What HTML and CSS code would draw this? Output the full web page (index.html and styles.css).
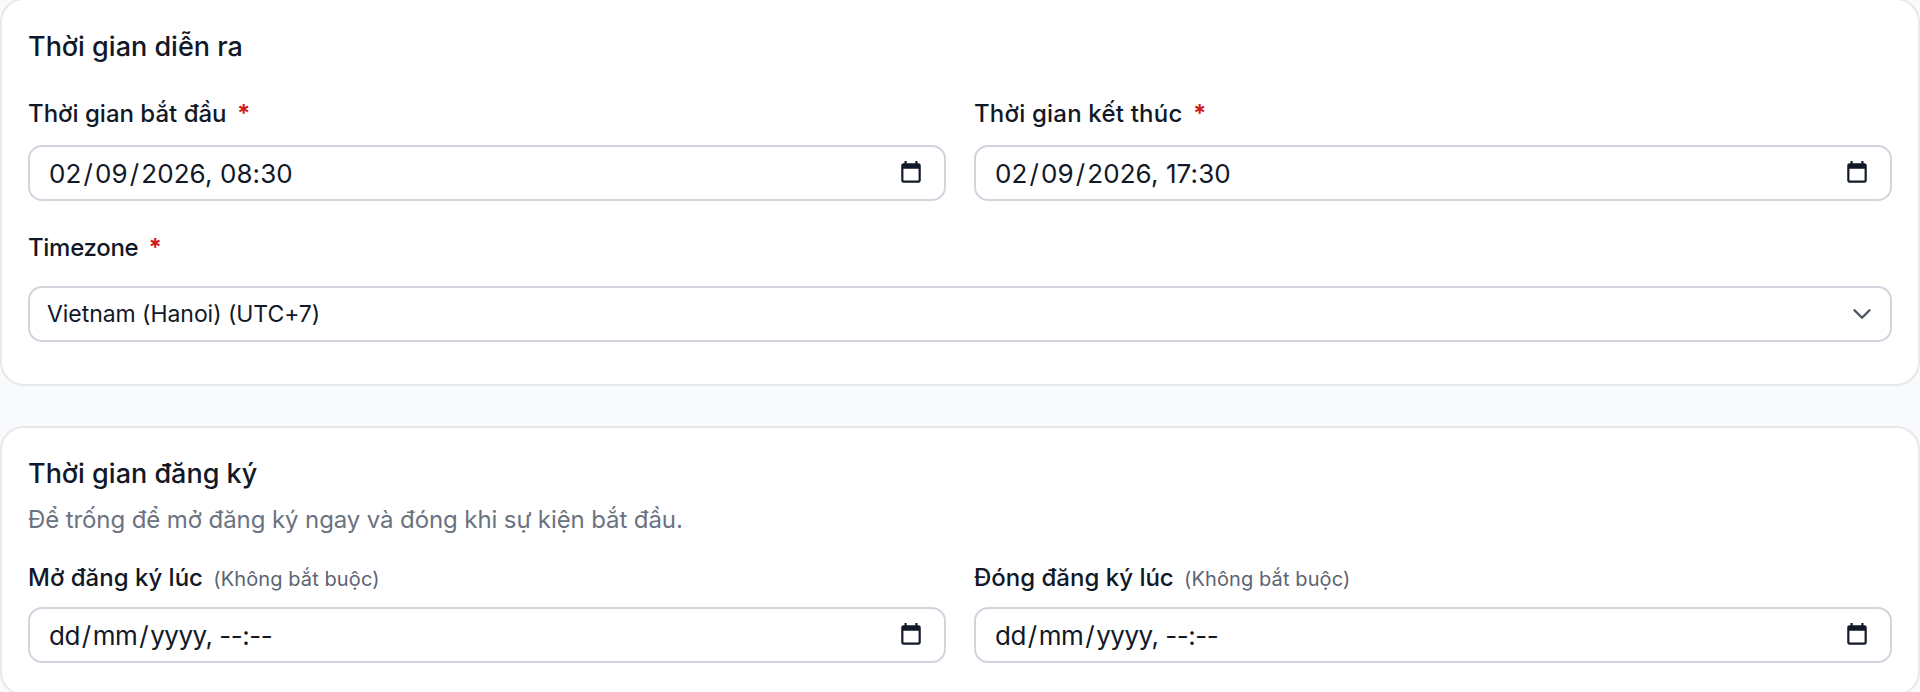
FILE: index.html
```html
<!DOCTYPE html>
<html lang="vi">
<head>
<meta charset="utf-8">
<title>Thời gian</title>
<link rel="stylesheet" href="styles.css">
</head>
<body>
<main class="page">
  <section class="card card-first">
    <h2 class="card-title">Thời gian diễn ra</h2>
    <div class="grid grid-first">
      <div class="field">
        <div class="label">Thời gian bắt đầu <span class="req">*</span></div>
        <div class="input"><span class="val">02<span class="sl">/</span>09<span class="sl">/</span>2026, 08:30</span>
          <svg class="cal" viewBox="0 0 24 24"><path d="M19 3h-1V1h-2v2H8V1H6v2H5c-1.11 0-2 .9-2 2v14c0 1.1.89 2 2 2h14c1.1 0 2-.9 2-2V5c0-1.1-.9-2-2-2zm0 16H5V8h14v11z"/></svg></div>
      </div>
      <div class="field">
        <div class="label label-wide">Thời gian kết thúc <span class="req">*</span></div>
        <div class="input"><span class="val">02<span class="sl">/</span>09<span class="sl">/</span>2026, 17:30</span>
          <svg class="cal" viewBox="0 0 24 24"><path d="M19 3h-1V1h-2v2H8V1H6v2H5c-1.11 0-2 .9-2 2v14c0 1.1.89 2 2 2h14c1.1 0 2-.9 2-2V5c0-1.1-.9-2-2-2zm0 16H5V8h14v11z"/></svg></div>
      </div>
    </div>
    <div class="field tz">
      <div class="label label-tz">Timezone <span class="req">*</span></div>
      <div class="input select"><span class="val-select">Vietnam (Hanoi) (UTC+7)</span>
        <svg class="chev" viewBox="0 0 20 20"><path d="M5 7.5l5 5 5-5"/></svg></div>
    </div>
  </section>
  <section class="card">
    <h2 class="card-title">Thời gian đăng ký</h2>
    <p class="desc">Để trống để mở đăng ký ngay và đóng khi sự kiện bắt đầu.</p>
    <div class="grid">
      <div class="field">
        <div class="label label-opt">Mở đăng ký lúc <span class="opt">(Không bắt buộc)</span></div>
        <div class="input"><span class="val ph">dd<span class="sl">/</span>mm<span class="sl">/</span>yyyy, --:--</span>
          <svg class="cal" viewBox="0 0 24 24"><path d="M19 3h-1V1h-2v2H8V1H6v2H5c-1.11 0-2 .9-2 2v14c0 1.1.89 2 2 2h14c1.1 0 2-.9 2-2V5c0-1.1-.9-2-2-2zm0 16H5V8h14v11z"/></svg></div>
      </div>
      <div class="field">
        <div class="label label-opt">Đóng đăng ký lúc <span class="opt">(Không bắt buộc)</span></div>
        <div class="input"><span class="val ph">dd<span class="sl">/</span>mm<span class="sl">/</span>yyyy, --:--</span>
          <svg class="cal" viewBox="0 0 24 24"><path d="M19 3h-1V1h-2v2H8V1H6v2H5c-1.11 0-2 .9-2 2v14c0 1.1.89 2 2 2h14c1.1 0 2-.9 2-2V5c0-1.1-.9-2-2-2zm0 16H5V8h14v11z"/></svg></div>
      </div>
    </div>
  </section>
</main>
</body>
</html>
```
FILE: styles.css
```css
* { box-sizing: border-box; }
html, body { margin: 0; height: 692px; overflow: hidden; background: #f9fafb; }
body { font-family: Inter, "Noto Sans", sans-serif; color: #111827; }
.page { margin-top: -2px; display: flex; flex-direction: column; gap: 40px; }
.card { background: #fff; border: 2px solid #e6e8ec; border-radius: 24px; padding: 28px 26px 31px; }
.card-first { padding-top: 29px; padding-bottom: 42px; }
.card-title { margin: 0; font-size: 27px; line-height: 36px; font-weight: 550; letter-spacing: 0; }
.grid { display: grid; grid-template-columns: 1fr 1fr; gap: 28px; margin-top: 35px; }
.grid-first { margin-top: 34px; }
.label { font-size: 24px; line-height: 28px; font-weight: 500; height: 46px; padding-top: 1px; }
.label-wide { letter-spacing: 0.2px; }
.req { color: #d11a1a; font-weight: 700; margin-left: 4px; }
.label-tz { height: 53px; letter-spacing: -0.3px; }
.tz { margin-top: 32px; }
.label-opt { height: 43px; padding-top: 0; }
.opt { font-size: 20px; font-weight: 400; color: #5b6472; margin-left: 4px; letter-spacing: 0.1px; }
.input { height: 56px; border: 2px solid #d0d5dd; border-radius: 14px; background: #fff; display: flex; align-items: center; justify-content: space-between; padding: 0 20px 0 19px; }
.select { padding: 0 13px 0 17px; }
.val { font-size: 26px; letter-spacing: 0.1px; color: #111827; }
.ph { letter-spacing: -0.5px; }
.sl { margin: 0 2px; }
.val-select { font-size: 23px; letter-spacing: -0.05px; }
.cal { width: 26px; height: 26px; fill: #111827; }
.chev { width: 30px; height: 30px; fill: none; stroke: #4b5563; stroke-width: 1.6; stroke-linecap: round; stroke-linejoin: round; }
.desc { margin: 12px 0 0; font-size: 24px; line-height: 32px; letter-spacing: -0.1px; color: #6b7280; }
.desc + .grid { margin-top: 28px; }
```
